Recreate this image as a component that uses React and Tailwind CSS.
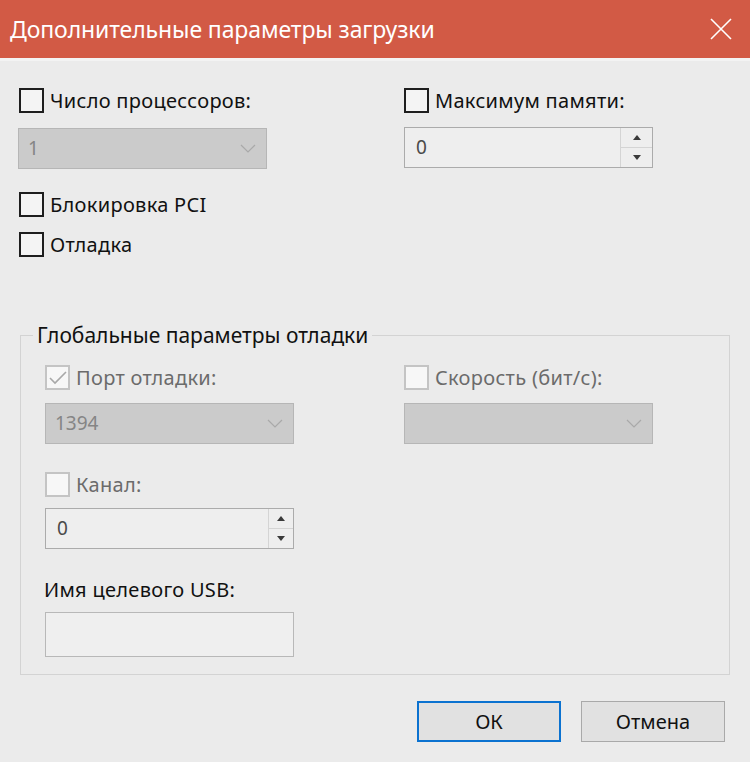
import React from 'react';

const font = { fontFamily: '"Noto Sans", "Open Sans", sans-serif' };

// thin chevron used by the combo boxes
function Chevron({ className }) {
  return (
    <svg width="16" height="9" viewBox="0 0 16 9" className={className}>
      <polyline points="1,1 8,8 15,1" fill="none" stroke="currentColor" strokeWidth="1.2" />
    </svg>
  );
}

function CheckBox({ checked, disabled, label, className = '' }) {
  return (
    <label className={`flex items-center gap-[6px] h-[25px] ${className}`}>
      <span
        className={`w-[25px] h-[25px] flex items-center justify-center flex-shrink-0 ${
          disabled ? 'border-2 border-[#c4c4c4] bg-[#f7f7f7]' : 'border-2 border-[#1e1e1e] bg-[#f4f4f4]'
        }`}
      >
        {checked && (
          <svg width="18" height="14" viewBox="0 0 18 14">
            <polyline points="1,7 6,12 17,1" fill="none" stroke="#a8a8a8" strokeWidth="1.6" />
          </svg>
        )}
      </span>
      <span className={`text-[20px] tracking-[0.3px] leading-none ${disabled ? 'text-[#6b6b6b]' : 'text-[#111]'}`}>{label}</span>
    </label>
  );
}

function Combo({ value }) {
  return (
    <div className="w-[249px] h-[41px] bg-[#cbcbcb] border border-[#b6b6b6] flex items-center justify-between pl-[9px] pr-[10px]">
      <span className="text-[19px] text-[#858585]">{value}</span>
      <Chevron className="text-[#a9a9a9]" />
    </div>
  );
}

function Spin({ value, btnWidth }) {
  return (
    <div className="w-[249px] h-[41px] bg-[#eeeeee] border border-[#ababab] flex">
      <div className="flex-1 flex items-center pl-[11px] text-[19px] text-[#4a4a4a]">{value}</div>
      <div className={`${btnWidth} flex flex-col border-l border-[#d4d4d4]`}>
        <div className="flex-1 flex items-center justify-center border-b border-[#d4d4d4]">
          <svg width="8" height="5" viewBox="0 0 8 5"><polygon points="0,5 4,0 8,5" fill="#3a3a3a" /></svg>
        </div>
        <div className="flex-1 flex items-center justify-center">
          <svg width="8" height="5" viewBox="0 0 8 5"><polygon points="0,0 4,5 8,0" fill="#3a3a3a" /></svg>
        </div>
      </div>
    </div>
  );
}

export default function App() {
  return (
    <div className="w-[750px] h-[762px] bg-[#ebebeb] flex flex-col overflow-hidden" style={font}>
      {/* Title bar */}
      <div className="h-[58px] bg-[#d25a45] flex items-center justify-between pl-[10px] pr-[18px] flex-shrink-0">
        <span className="text-[23px] text-white tracking-[-0.1px]">Дополнительные параметры загрузки</span>
        <svg width="22" height="22" viewBox="0 0 22 22">
          <path d="M1 1 L21 21 M21 1 L1 21" stroke="#fff" strokeWidth="1.6" />
        </svg>
      </div>

      <div className="flex-1 flex flex-col border-t-[3px] border-[#f3f3f3]">
        {/* Top options */}
        <div className="grid grid-cols-[386px_1fr] pl-[18px] pt-[27px]">
          <div className="flex flex-col">
            <CheckBox label="Число процессоров:" className="ml-[1px]" />
            <div className="mt-[15px]">
              <Combo value="1" />
            </div>
            <CheckBox label="Блокировка PCI" className="mt-[23px] ml-[1px]" />
            <CheckBox label="Отладка" className="mt-[15px] ml-[1px]" />
          </div>
          <div className="flex flex-col">
            <CheckBox label="Максимум памяти:" />
            <div className="mt-[14px]">
              <Spin value="0" btnWidth="w-[32px]" />
            </div>
          </div>
        </div>

        {/* Global debug settings group */}
        <fieldset className="ml-[20px] w-[710px] mt-[63px] border border-[#d3d3d3] h-[355px]">
          <legend className="ml-[12px] px-[4px] text-[21px] leading-[30px] text-[#111]">Глобальные параметры отладки</legend>
          <div className="grid grid-cols-[359px_1fr] pl-[24px] pt-[15px]">
            <div className="flex flex-col">
              <CheckBox checked disabled label="Порт отладки:" />
              <div className="mt-[13px]">
                <Combo value="1394" />
              </div>
              <CheckBox disabled label="Канал:" className="mt-[28px]" />
              <div className="mt-[11px]">
                <Spin value="0" btnWidth="w-[25px]" />
              </div>
              <span className="mt-[31px] text-[20px] tracking-[0.3px] leading-none text-[#111] -ml-[1px]">Имя целевого USB:</span>
              <div className="mt-[12px] w-[249px] h-[45px] bg-[#efefef] border border-[#b8b8b8]" />
            </div>
            <div className="flex flex-col">
              <CheckBox disabled label="Скорость (бит/с):" />
              <div className="mt-[13px]">
                <Combo value="" />
              </div>
            </div>
          </div>
        </fieldset>

        {/* Buttons */}
        <div className="flex justify-end gap-[20px] pr-[25px] mt-[26px]">
          <button className="w-[144px] h-[41px] bg-[#e1e1e1] border-2 border-[#0b72d0] text-[20px] text-[#111]">ОК</button>
          <button className="w-[144px] h-[41px] bg-[#e1e1e1] border border-[#a9a9a9] text-[20px] text-[#111]">Отмена</button>
        </div>
      </div>
    </div>
  );
}
